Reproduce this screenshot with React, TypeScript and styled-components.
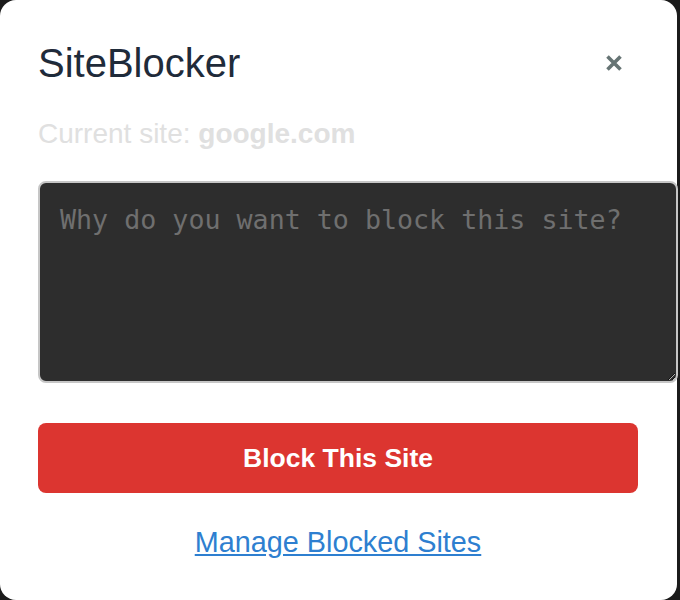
import React from "react";
import styled, { createGlobalStyle } from "styled-components";

const GlobalStyle = createGlobalStyle`
  html, body {
    margin: 0;
    padding: 0;
    background: #1b1b1b;
  }
  body {
    font-family: "Liberation Sans", Arial, Helvetica, sans-serif;
  }
`;

const Card = styled.div`
  width: 677px;
  height: 600px;
  box-sizing: border-box;
  background: #ffffff;
  border-radius: 16px;
  padding: 40px 39px 0 38px;
  display: flex;
  flex-direction: column;
`;

const Header = styled.div`
  display: flex;
  align-items: center;
  justify-content: space-between;
`;

const Title = styled.h1`
  margin: 0;
  font-size: 40px;
  line-height: 46px;
  font-weight: 400;
  color: #1f2b3a;
`;

const CloseButton = styled.button`
  width: 18px;
  height: 18px;
  padding: 0;
  margin-right: 15px;
  border: none;
  background: none;
  display: flex;
  align-items: center;
  justify-content: center;
  cursor: pointer;
  color: #667474;
`;

const SiteInfo = styled.p`
  margin: 32px 0 0;
  font-size: 28px;
  line-height: 32px;
  color: #e0e0e0;
`;

const SiteName = styled.strong`
  font-weight: 700;
`;

const ReasonInput = styled.textarea`
  display: block;
  margin-top: 31px;
  width: calc(100% + 40px);
  height: 202px;
  box-sizing: border-box;
  padding: 21px 20px;
  border: 2px solid #c6c6c6;
  border-radius: 8px;
  background: #2d2d2d;
  color: #e0e0e0;
  font-family: "DejaVu Sans Mono", "Liberation Mono", monospace;
  font-size: 26.67px;
  line-height: 32px;
  resize: vertical;
  outline: none;

  &::placeholder {
    color: #6f6f6f;
  }
`;

const BlockButton = styled.button`
  margin-top: 40px;
  height: 70px;
  width: 100%;
  border: none;
  border-radius: 8px;
  background: #dc3530;
  color: #ffffff;
  font-family: "Liberation Sans", Arial, sans-serif;
  font-size: 26.5px;
  font-weight: 700;
  cursor: pointer;
`;

const ManageLink = styled.a`
  margin-top: 33px;
  align-self: center;
  font-size: 28.8px;
  line-height: 32px;
  color: #2e7fd0;
  text-decoration: underline;
  cursor: pointer;
`;

export default function App() {
  return (
    <>
      <GlobalStyle />
      <Card>
        <Header>
          <Title>SiteBlocker</Title>
          <CloseButton aria-label="Close">
            <svg width="18" height="18" viewBox="0 0 18 18">
              <path
                d="M2.5 2.5 L15.5 15.5 M15.5 2.5 L2.5 15.5"
                stroke="currentColor"
                strokeWidth="3.6"
                strokeLinecap="butt"
              />
            </svg>
          </CloseButton>
        </Header>
        <SiteInfo>
          Current site: <SiteName>google.com</SiteName>
        </SiteInfo>
        <ReasonInput placeholder="Why do you want to block this site?" />
        <BlockButton>Block This Site</BlockButton>
        <ManageLink>Manage Blocked Sites</ManageLink>
      </Card>
    </>
  );
}
